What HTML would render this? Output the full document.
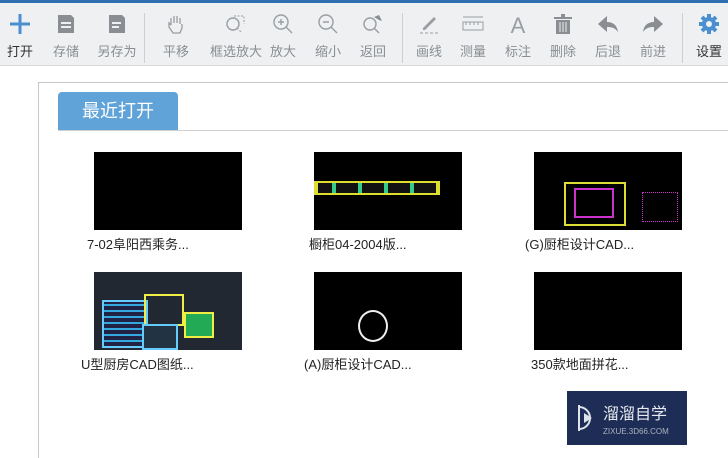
<!DOCTYPE html>
<html style="overflow:hidden;width:728px;height:458px"><head><meta charset="utf-8"><style>
*{margin:0;padding:0;box-sizing:border-box}
body{width:728px;height:458px;overflow:hidden;background:#fff;font-family:"Liberation Sans","Noto Sans CJK SC",sans-serif;position:relative}
.top{position:absolute;left:0;top:0;width:728px;height:3px;background:#2f6fb0}
.tb{position:absolute;left:0;top:3px;width:728px;height:63px;background:#eef0f2;border-bottom:1px solid #d8dadc}
.it{position:absolute;top:0;width:60px;margin-left:-30px;text-align:center}
.it svg{position:absolute;left:19px;top:10px}
.it span{position:absolute;top:38px;left:0;width:60px;font-size:13px;color:#8a8e92;white-space:nowrap}
.dv{position:absolute;top:10px;width:1px;height:50px;background:#ccd0d4}
.panel{position:absolute;left:38px;top:82px;width:700px;height:390px;border:1px solid #c8c8c8}
.tab{position:absolute;left:58px;top:92px;width:120px;height:38px;background:#5fa3d8;border-radius:4px 4px 0 0;color:#fff;font-size:18px;line-height:38px;text-align:center}
.tl{position:absolute;left:58px;top:130px;width:670px;height:1px;background:#cfcfcf}
.th{position:absolute;width:148px;height:78px;background:#000;overflow:hidden}
.lb{position:absolute;font-size:13px;color:#222;white-space:nowrap}
.wm{position:absolute;left:567px;top:391px;width:120px;height:54px;background:#1e2d55}
</style></head><body>
<div class="top"></div>
<div class="tb">
<div class="it" style="left:20px"><svg width="22" height="22"><path d="M11 1v20M1 11h20" stroke="#4a90d0" stroke-width="3"/></svg><span style="color:#333">打开</span></div>
<div class="it" style="left:66px"><svg width="22" height="22"><path d="M3 2h13l3 3v15H3z" fill="#8a8e92"/><rect x="6" y="9" width="10" height="2" fill="#eef0f2"/><rect x="6" y="13" width="10" height="2" fill="#eef0f2"/></svg><span>存储</span></div>
<div class="it" style="left:117px"><svg width="22" height="22"><path d="M3 2h13l3 3v15H3z" fill="#8a8e92"/><rect x="6" y="9" width="9" height="2" fill="#eef0f2"/><rect x="6" y="13" width="7" height="2" fill="#eef0f2"/></svg><span>另存为</span></div>
<div class="dv" style="left:144px"></div>
<div class="it" style="left:176px"><svg width="22" height="22"><path d="M6 12V5M9 10V3M12 10V3M15 11V5M6 12l-2-2v4l4 6h7l2-5v-4" stroke="#9a9ea2" fill="none" stroke-width="1.3"/></svg><span>平移</span></div>
<div class="it" style="left:236px"><svg width="22" height="22"><circle cx="8" cy="11" r="6" stroke="#9a9ea2" fill="none" stroke-width="1.4"/><path d="M12 15l5 5M9 3h10v8" stroke="#9a9ea2" fill="none" stroke-dasharray="2 1.5"/></svg><span>框选放大</span></div>
<div class="it" style="left:283px"><svg width="22" height="22"><circle cx="9" cy="9" r="7" stroke="#9a9ea2" fill="none" stroke-width="1.4"/><path d="M14 14l6 6M6 9h6M9 6v6" stroke="#9a9ea2" stroke-width="1.4"/></svg><span>放大</span></div>
<div class="it" style="left:328px"><svg width="22" height="22"><circle cx="9" cy="9" r="7" stroke="#9a9ea2" fill="none" stroke-width="1.4"/><path d="M14 14l6 6M6 9h6" stroke="#9a9ea2" stroke-width="1.4"/></svg><span>缩小</span></div>
<div class="it" style="left:373px"><svg width="22" height="22"><circle cx="8" cy="11" r="6" stroke="#9a9ea2" fill="none" stroke-width="1.4"/><path d="M12 15l5 5" stroke="#9a9ea2" stroke-width="1.4"/><path d="M12 4l5-2 3 6-3-1z" fill="#8a8e92"/></svg><span>返回</span></div>
<div class="dv" style="left:402px"></div>
<div class="it" style="left:429px"><svg width="22" height="22"><path d="M5 15L16 4l2 2L7 17H5z" fill="#9a9ea2"/><path d="M2 20h18" stroke="#9a9ea2" stroke-dasharray="3 2"/></svg><span>画线</span></div>
<div class="it" style="left:473px"><svg width="22" height="22"><rect x="1" y="9" width="20" height="8" stroke="#9a9ea2" fill="none"/><path d="M1 4h20M4 9v3M8 9v3M12 9v3M16 9v3" stroke="#9a9ea2"/></svg><span>测量</span></div>
<div class="it" style="left:518px"><svg width="22" height="22"><text x="11" y="20" font-size="22" text-anchor="middle" fill="#9a9ea2" font-family="Liberation Sans">A</text></svg><span>标注</span></div>
<div class="it" style="left:563px"><svg width="22" height="22"><path d="M9 1h4v3h7v2H2V4h7z" fill="#8a8e92"/><path d="M4 7h14v14H4z" fill="#8a8e92"/><path d="M8 9v10M11 9v10M14 9v10" stroke="#eef0f2"/></svg><span>删除</span></div>
<div class="it" style="left:608px"><svg width="22" height="22"><path d="M10 3L1 11l9 8v-5c5 0 8 1 11 5-1-7-5-10-11-10z" fill="#8a8e92"/></svg><span>后退</span></div>
<div class="it" style="left:653px"><svg width="22" height="22"><path d="M12 3l9 8-9 8v-5c-5 0-8 1-11 5 1-7 5-10 11-10z" fill="#8a8e92"/></svg><span>前进</span></div>
<div class="dv" style="left:682px"></div>
<div class="it" style="left:709px"><svg width="22" height="22"><circle cx="11" cy="11" r="7" fill="#4a90d0"/><path d="M11 1v20M1 11h20M4 4l14 14M18 4L4 18" stroke="#4a90d0" stroke-width="4"/><circle cx="11" cy="11" r="3" fill="#eef0f2"/></svg><span style="color:#333">设置</span></div>
</div>
<div class="panel"></div>
<div class="tab">最近打开</div>
<div class="tl"></div>

<div class="th" style="left:94px;top:152px"></div>
<div class="th" style="left:314px;top:152px"><div style="position:absolute;left:0;top:29px;width:126px;height:14px;background:#dede30"></div><div style="position:absolute;left:4px;top:31px;width:118px;height:10px;background:repeating-linear-gradient(90deg,#111 0 14px,#3c8 14px 18px,#111 18px 26px)"></div></div>
<div class="th" style="left:534px;top:152px"><div style="position:absolute;left:30px;top:30px;width:62px;height:44px;border:2px solid #dd3;"></div><div style="position:absolute;left:40px;top:36px;width:40px;height:30px;border:2px solid #c3c"></div><div style="position:absolute;left:108px;top:40px;width:36px;height:30px;border:1px dotted #c3c"></div></div>
<div class="th" style="left:94px;top:272px;background:#222831"><div style="position:absolute;left:8px;top:28px;width:46px;height:48px;border:2px solid #6cf;background:repeating-linear-gradient(0deg,#224 0 4px,#3ad 4px 6px)"></div><div style="position:absolute;left:50px;top:22px;width:40px;height:32px;border:2px solid #ee4"></div><div style="position:absolute;left:48px;top:52px;width:36px;height:26px;border:2px solid #6cf;background:#234"></div><div style="position:absolute;left:90px;top:40px;width:30px;height:26px;border:2px solid #ee4;background:#2a5"></div></div>
<div class="th" style="left:314px;top:272px"><div style="position:absolute;left:44px;top:38px;width:30px;height:32px;border:2px solid #eee;border-radius:50%"></div></div>
<div class="th" style="left:534px;top:272px"></div>

<div class="lb" style="left:87px;top:234px">7-02阜阳西乘务...</div>
<div class="lb" style="left:309px;top:234px">橱柜04-2004版...</div>
<div class="lb" style="left:525px;top:234px">(G)厨柜设计CAD...</div>
<div class="lb" style="left:81px;top:354px">U型厨房CAD图纸...</div>
<div class="lb" style="left:304px;top:354px">(A)厨柜设计CAD...</div>
<div class="lb" style="left:531px;top:354px">350款地面拼花...</div>

<div class="wm"><svg width="120" height="54"><path d="M12 16a11 11 0 1 1 0 22" stroke="#dfe3ea" stroke-width="2" fill="none"/><path d="M12 14v26" stroke="#dfe3ea" stroke-width="2"/><path d="M17 22l8 5-8 5z" fill="#dfe3ea"/><text x="36" y="28" font-size="16" fill="#e6e9ef" font-family="Noto Sans CJK SC,sans-serif">溜溜自学</text><text x="36" y="43" font-size="8" fill="#aab2c0" font-family="Liberation Sans">ZIXUE.3D66.COM</text></svg></div>
</body></html>
